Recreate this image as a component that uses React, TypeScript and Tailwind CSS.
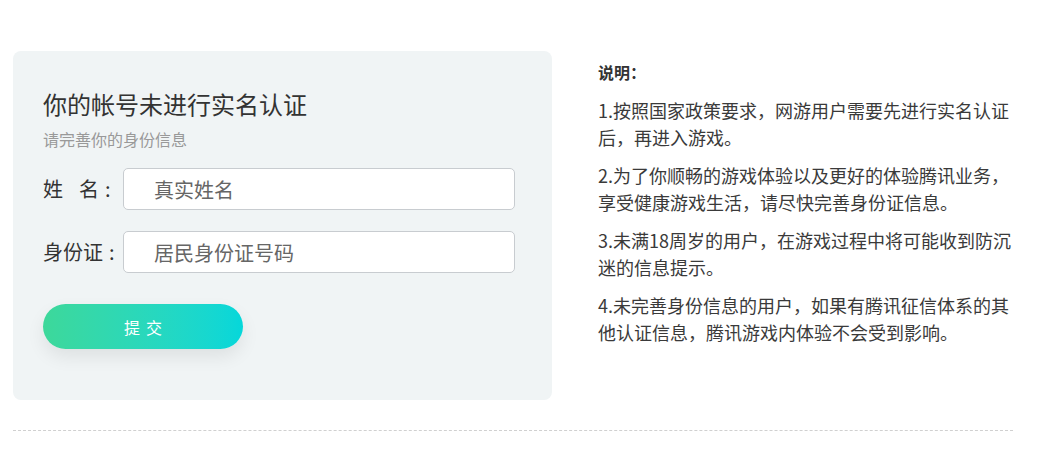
export default function App() {
  return (
    <div
      className="w-[1063px] h-[451px] bg-white pl-[13px] pt-[51px]"
      style={{ fontFamily: '"Microsoft YaHei", "Noto Sans CJK SC", sans-serif' }}
    >
      <div className="flex items-start">
        {/* Form card */}
        <div className="w-[539px] h-[349px] rounded-lg bg-[#f0f4f5] pl-[30px] pt-[37px]">
          <h2 className="text-[24px] leading-[32px] text-[#333]">你的帐号未进行实名认证</h2>
          <p className="mt-[7px] text-[16px] leading-[24px] text-[#999]">请完善你的身份信息</p>

          <div className="mt-[17px] flex items-center">
            <label className="flex w-[80px] text-[20px] text-[#333]">
              <span>姓</span>
              <span className="ml-[16px]">名</span>
              <span className="ml-[6px]">:</span>
            </label>
            <input
              className="h-[42px] w-[392px] rounded-[5px] border border-[#c8ccd0] bg-white pl-[30px] text-[20px] text-[#333] outline-none placeholder:text-[#666]"
              placeholder="真实姓名"
            />
          </div>

          <div className="mt-[21px] flex items-center">
            <label className="flex w-[80px] text-[20px] text-[#333]">
              <span>身份证</span>
              <span className="ml-[6px]">:</span>
            </label>
            <input
              className="h-[42px] w-[392px] rounded-[5px] border border-[#c8ccd0] bg-white pl-[30px] text-[20px] text-[#333] outline-none placeholder:text-[#666]"
              placeholder="居民身份证号码"
            />
          </div>

          <button className="mt-[31px] flex h-[45px] w-[200px] items-center justify-center rounded-full bg-gradient-to-r from-[#3dd89a] to-[#05d7da] text-[16px] tracking-[6px] text-white shadow-[0_8px_18px_rgba(0,0,0,0.08)]">
            <span className="pl-[6px]">提交</span>
          </button>
        </div>

        {/* Notes */}
        <div className="ml-[46px] w-[418px] pt-[9px] text-[#333]">
          <h3 className="text-[16px] leading-[24px] font-bold">说明：</h3>
          <div className="mt-[13px] flex flex-col gap-[11px] text-[18px] leading-[27px] text-[#3a3a3a]">
            <p>1.按照国家政策要求，网游用户需要先进行实名认证后，再进入游戏。</p>
            <p>2.为了你顺畅的游戏体验以及更好的体验腾讯业务，享受健康游戏生活，请尽快完善身份证信息。</p>
            <p>3.未满18周岁的用户，在游戏过程中将可能收到防沉迷的信息提示。</p>
            <p>4.未完善身份信息的用户，如果有腾讯征信体系的其他认证信息，腾讯游戏内体验不会受到影响。</p>
          </div>
        </div>
      </div>

      <div className="mt-[30px] w-[1000px] border-t border-dashed border-[#d0d0d0]" />
    </div>
  );
}
